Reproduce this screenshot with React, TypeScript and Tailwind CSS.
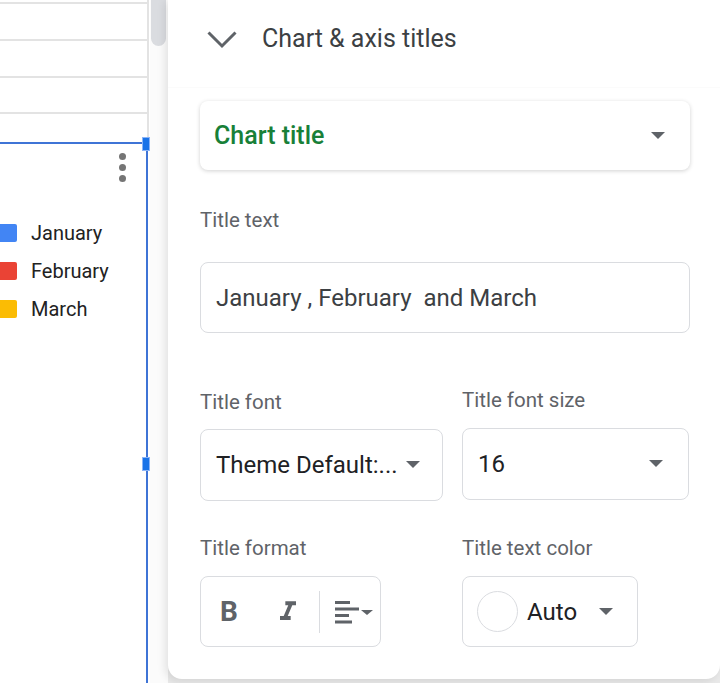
import React from 'react';

const Caret = () => (
    <svg width="14" height="8" viewBox="0 0 14 8" className="shrink-0">
        <path d="M0 0h14L7 7z" fill="#5f6368" />
    </svg>
);

const LEGEND = [
    { label: 'January', color: 'bg-[#4285f4]' },
    { label: 'February', color: 'bg-[#ea4335]' },
    { label: 'March', color: 'bg-[#fbbc04]' },
];

const SheetSide: React.FC = () => (
    <div className="relative w-[150px] h-full bg-white">
        {/* grid cells */}
        <div className="w-[149px] border-r-2 border-[#e3e3e3]">
            <div className="h-[4px] border-b-2 border-[#e3e3e3]" />
            <div className="h-[37px] border-b-2 border-[#e3e3e3]" />
            <div className="h-[37px] border-b-2 border-[#e3e3e3]" />
            <div className="h-[36px] border-b-2 border-[#e3e3e3]" />
            <div className="h-[36px]" />
        </div>

        {/* chart sitting on the sheet */}
        <div className="absolute left-0 top-[142px] bottom-0 w-[148px] border-t-2 border-r-2 border-[#3f74d6] bg-white">
            <div className="flex justify-end pr-[20px] pt-[9px]">
                <div className="flex flex-col gap-[4px]">
                    <span className="w-[7px] h-[7px] rounded-full bg-[#757575]" />
                    <span className="w-[7px] h-[7px] rounded-full bg-[#757575]" />
                    <span className="w-[7px] h-[7px] rounded-full bg-[#757575]" />
                </div>
            </div>
            <div className="mt-[42px] flex flex-col gap-[20px]">
                {LEGEND.map(item => (
                    <div key={item.label} className="flex items-center h-[18px]">
                        <span className={`w-[17px] h-[18px] rounded-r-[2px] ${item.color}`} />
                        <span className="ml-[14px] text-[20px] text-[#222] leading-none">{item.label}</span>
                    </div>
                ))}
            </div>
            {/* resize handles */}
            <span className="absolute right-[-4px] top-[-7px] w-[8px] h-[14px] bg-[#1a73e8] border border-[#8ab4f8]" />
            <span className="absolute right-[-4px] top-[313px] w-[8px] h-[14px] bg-[#1a73e8] border border-[#8ab4f8]" />
        </div>
    </div>
);

const Select: React.FC<{ value: string; className: string }> = ({ value, className }) => (
    <div className={`${className} h-[72px] rounded-[8px] border border-[#dadce0] bg-white flex items-center pl-[15px]`}>
        <span className="flex-1 text-[24px] text-[#202124]">{value}</span>
        <Caret />
    </div>
);

const Label: React.FC<{ children: React.ReactNode; className?: string }> = ({ children, className = '' }) => (
    <p className={`text-[20.5px] leading-[24px] text-[#5f6368] ${className}`}>{children}</p>
);

const App: React.FC = () => {
    return (
        <div className="w-[720px] h-[683px] overflow-hidden flex bg-white font-['Roboto',sans-serif]">
            <SheetSide />

            {/* scrollbar gutter */}
            <div className="w-[18px] h-full bg-[#fbfbfb]">
                <div className="ml-[1px] w-[15px] h-[46px] rounded-b-full bg-[#dadce0]" />
            </div>

            <div className="flex-1 h-full bg-[#e9e9e9]">
                <div className="h-[679px] bg-white rounded-b-[14px] shadow-[-3px_2px_8px_rgba(0,0,0,0.10)] pl-[32px] pr-[30px]">
                    <header className="h-[88px] flex items-start pt-[24px] border-b border-[#fbfbfb] -mx-[32px] px-[39px]">
                        <svg width="30" height="18" viewBox="0 0 30 18" className="mt-[7px]">
                            <polyline points="1.5,1.5 15,15 28.5,1.5" fill="none" stroke="#5f6368" strokeWidth="3" />
                        </svg>
                        <h2 className="ml-[25px] text-[25px] text-[#3c4043] leading-[30px]">Chart &amp; axis titles</h2>
                    </header>

                    <div className="mt-[13px] h-[69px] rounded-[8px] bg-white shadow-[0_1px_4px_rgba(0,0,0,0.18)] flex items-center pl-[14px] pr-[25px]">
                        <span className="flex-1 text-[25px] font-medium text-[#188038]">Chart title</span>
                        <Caret />
                    </div>

                    <Label className="mt-[38px]">Title text</Label>
                    <div className="mt-[30px] h-[71px] rounded-[8px] border border-[#dadce0] flex items-center pl-[15px]">
                        <span className="text-[24px] text-[#3c4043] whitespace-pre">January , February  and March</span>
                    </div>

                    <div className="mt-[55px] grid grid-cols-[243px_227px] gap-x-[19px]">
                        <div>
                            <Label className="mt-[2px]">Title font</Label>
                            <div className="mt-[15px]">
                                <Select value="Theme Default:..." className="w-[243px] pr-[22px]" />
                            </div>
                        </div>
                        <div>
                            <Label>Title font size</Label>
                            <div className="mt-[16px]">
                                <Select value="16" className="w-[227px] pr-[25px]" />
                            </div>
                        </div>
                    </div>

                    <div className="mt-[35px] grid grid-cols-[243px_227px] gap-x-[19px]">
                        <div>
                            <Label>Title format</Label>
                            <div className="mt-[16px] w-[181px] h-[71px] rounded-[8px] border border-[#dadce0] flex items-center">
                                <span className="ml-[19px] w-[20px] text-[28px] font-bold text-[#5f6368] leading-none">B</span>
                                <svg width="32" height="32" viewBox="0 0 24 24" className="ml-[32px]">
                                    <path d="M10 4v3h2.21l-3.42 8H6v3h8v-3h-2.21l3.42-8H18V4z" fill="#5f6368" />
                                </svg>
                                <span className="ml-[15px] w-px h-[42px] bg-[#dadce0]" />
                                <svg width="40" height="24" viewBox="0 0 40 24" className="ml-[15px]">
                                    <rect x="0" y="1" width="15" height="3" fill="#5f6368" />
                                    <rect x="0" y="7.5" width="24" height="3" fill="#5f6368" />
                                    <rect x="0" y="14" width="14" height="3" fill="#5f6368" />
                                    <rect x="0" y="20.5" width="17" height="3" fill="#5f6368" />
                                    <path d="M26 10h12l-6 5z" fill="#5f6368" />
                                </svg>
                            </div>
                        </div>
                        <div>
                            <Label>Title text color</Label>
                            <div className="mt-[16px] w-[176px] h-[71px] rounded-[8px] border border-[#dadce0] flex items-center pl-[14px]">
                                <span className="w-[41px] h-[41px] rounded-full border border-[#dadce0]" />
                                <span className="ml-[9px] text-[24px] text-[#202124]">Auto</span>
                                <span className="ml-[22px]"><Caret /></span>
                            </div>
                        </div>
                    </div>
                </div>
            </div>
        </div>
    );
};

export default App;
